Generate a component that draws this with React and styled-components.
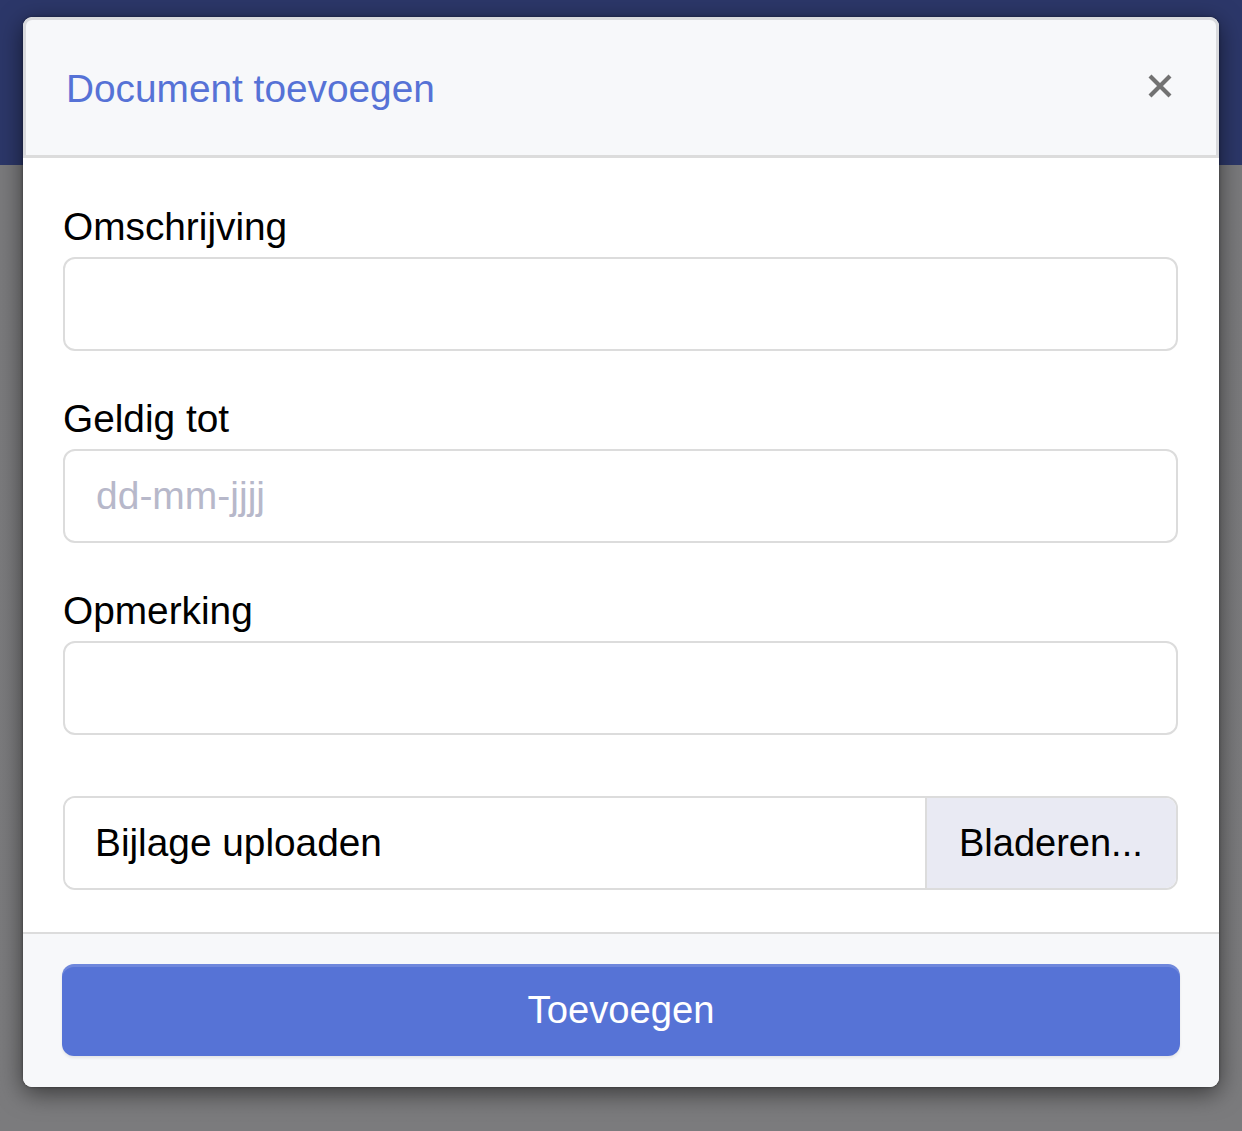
import React from "react";
import styled, { createGlobalStyle } from "styled-components";

const Global = createGlobalStyle`
  html, body { margin: 0; padding: 0; }
  body {
    font-family: "Liberation Sans", Arial, sans-serif;
    background: #7b7b7d;
  }
  * { box-sizing: border-box; }
`;

const Backdrop = styled.div`
  min-height: 1131px;
  padding: 17px 23px 45px;
  background: linear-gradient(to bottom, #2c3769 0, #2c3769 165px, #7a7a7c 165px, #7b7b7d 100%);
`;

const Modal = styled.div`
  width: 1196px;
  border-radius: 9px;
  background: #fff;
  overflow: hidden;
  box-shadow: 0 6px 24px rgba(0, 0, 0, 0.55), 0 0 3px rgba(0, 0, 0, 0.4);
`;

const Header = styled.div`
  height: 141px;
  display: flex;
  align-items: center;
  justify-content: space-between;
  padding: 0 42px 0 40px;
  background: #f7f8fa;
  border: 3px solid #d9dadd;
  border-bottom-color: #dcdcdc;
  border-radius: 9px 9px 0 0;
`;

const Title = styled.h5`
  margin: 0;
  font-size: 38.8px;
  font-weight: 400;
  color: #5672d6;
  line-height: 1.2;
  padding-top: 3px;
`;

const Close = styled.button`
  border: 0;
  background: none;
  padding: 0;
  width: 28px;
  height: 28px;
  display: flex;
  align-items: center;
  justify-content: center;
  cursor: pointer;
  margin-top: -4px;
`;

const Body = styled.div`
  padding: 45px 41px 42px 40px;
`;

const Group = styled.div`
  margin-bottom: ${(p) => p.$mb || 44}px;
`;

const Label = styled.label`
  display: block;
  font-size: 38.8px;
  line-height: 48px;
  color: #000;
  margin-bottom: 6px;
`;

const Input = styled.input`
  display: block;
  width: 100%;
  height: 94px;
  border: 2px solid #dcdcdc;
  border-radius: 12px;
  background: #fff;
  padding: 0 31px;
  font-family: "Liberation Sans", Arial, sans-serif;
  font-size: 39px;
  color: #000;
  outline: none;
  &::placeholder {
    color: #b7b8ca;
  }
`;

const FileField = styled.div`
  display: flex;
  height: 94px;
  border: 2px solid #dcdcdc;
  border-radius: 12px;
  overflow: hidden;
`;

const FileText = styled.div`
  flex: 1;
  display: flex;
  align-items: center;
  padding-left: 30px;
  font-size: 38.8px;
  color: #000;
  background: #fff;
`;

const Browse = styled.div`
  width: 251px;
  display: flex;
  align-items: center;
  padding-left: 32px;
  background: #e9eaf3;
  border-left: 2px solid #dcdcdc;
  font-size: 38px;
  color: #000;
`;

const Footer = styled.div`
  border-top: 2px solid #dcdcdc;
  background: #f7f8fa;
  padding: 30px 39px 31px 39px;
`;

const Submit = styled.button`
  display: block;
  width: 100%;
  height: 92px;
  border: 0;
  border-radius: 12px;
  background: #5673d6;
  color: #fff;
  font-family: "Liberation Sans", Arial, sans-serif;
  font-size: 38.2px;
  box-shadow: inset 0 3px 0 rgba(255, 255, 255, 0.15), 0 2px 3px rgba(0, 0, 0, 0.08);
  cursor: pointer;
`;

export default function App() {
  return (
    <>
      <Global />
      <Backdrop>
        <Modal>
          <Header>
            <Title>Document toevoegen</Title>
            <Close aria-label="Sluiten">
              <svg width="24" height="24" viewBox="0 0 24 24">
                <path d="M2 2 L22 22 M22 2 L2 22" stroke="#727272" strokeWidth="4.2" strokeLinecap="butt" />
              </svg>
            </Close>
          </Header>
          <Body>
            <Group>
              <Label>Omschrijving</Label>
              <Input type="text" />
            </Group>
            <Group>
              <Label>Geldig tot</Label>
              <Input type="text" placeholder="dd-mm-jjjj" />
            </Group>
            <Group $mb={61}>
              <Label>Opmerking</Label>
              <Input type="text" />
            </Group>
            <FileField>
              <FileText>Bijlage uploaden</FileText>
              <Browse>Bladeren...</Browse>
            </FileField>
          </Body>
          <Footer>
            <Submit>Toevoegen</Submit>
          </Footer>
        </Modal>
      </Backdrop>
    </>
  );
}
